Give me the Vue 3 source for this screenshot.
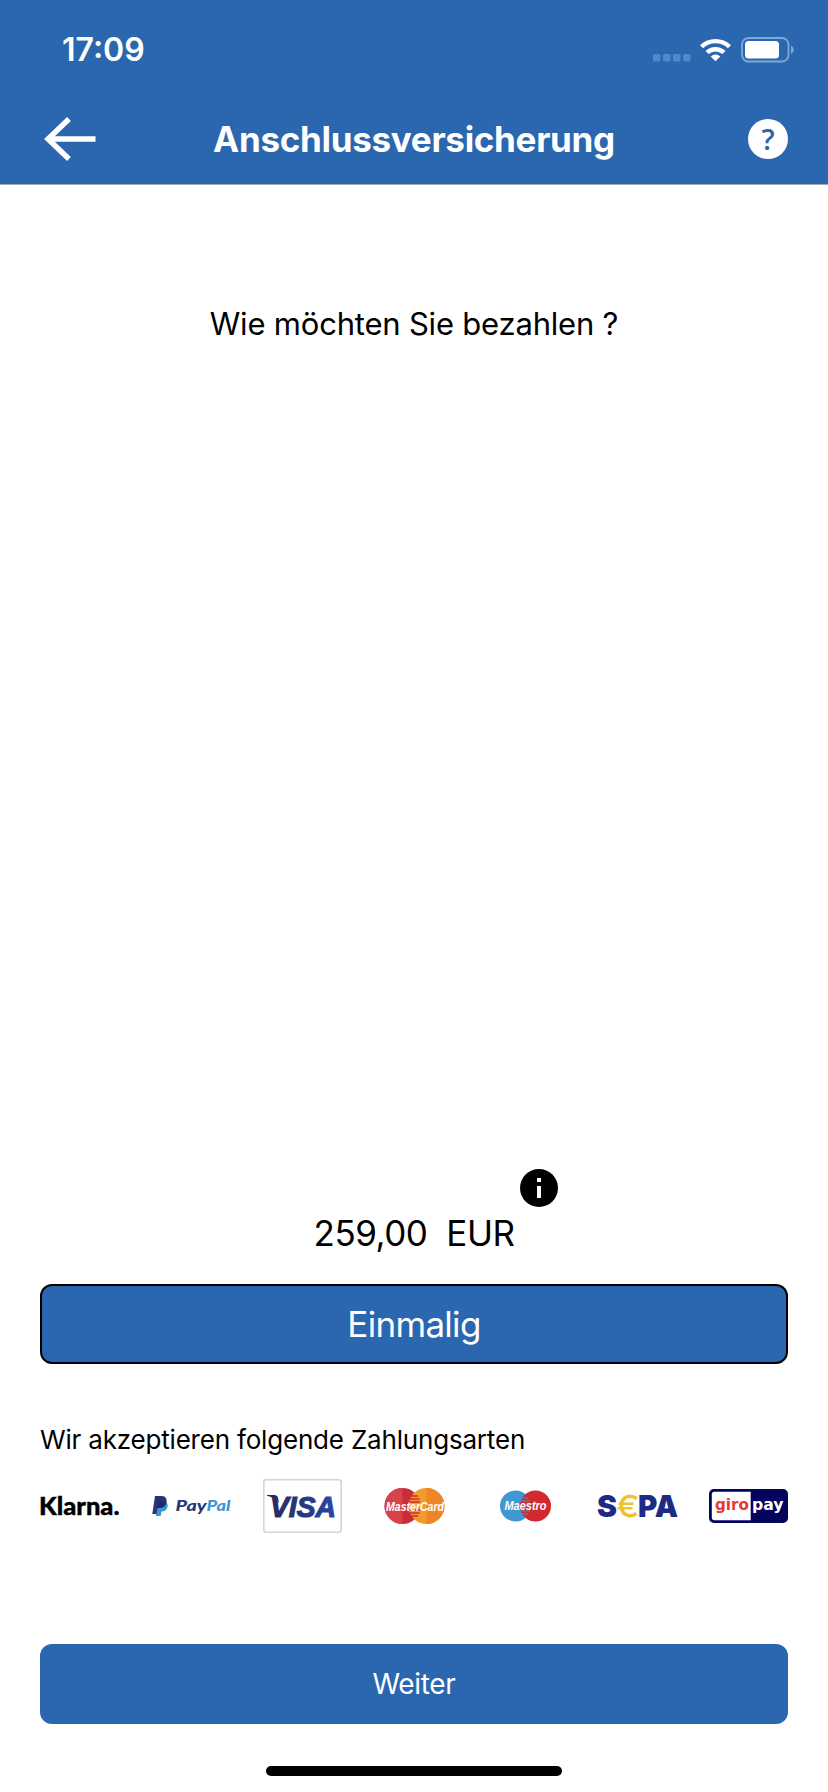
<template>
  <div class="screen">
    <header class="header">
      <div class="status-bar">
        <span class="time">17:09</span>
        <svg class="status-icons" width="142" height="26" viewBox="0 0 142 26">
          <g fill="#5089c8">
            <rect v-for="n in 4" :key="n" :x="n * 10 - 9" y="17" width="7.5" height="7.5" rx="1.5" />
          </g>
          <g fill="#fff">
            <path d="M48 8.2 A22.5 22.5 0 0 1 79 8.2 L75.9 11.2 A18 18 0 0 0 51.1 11.2 Z" />
            <path d="M53.5 13.9 A14.5 14.5 0 0 1 73.5 13.9 L70.3 17.1 A10 10 0 0 0 56.7 17.1 Z" />
            <path d="M58.7 19.4 A7 7 0 0 1 68.3 19.4 L63.5 24.2 Z" />
          </g>
          <rect x="90" y="1" width="46.5" height="23.5" rx="6.5" fill="none" stroke="#7fa9d8" stroke-width="1.8" />
          <rect x="93" y="4" width="34" height="17.5" rx="3.5" fill="#fff" />
          <path d="M139 8.5 Q141.8 10 141.8 12.7 T139 17 Z" fill="#7fa9d8" />
        </svg>
      </div>
      <div class="nav-bar">
        <svg class="back" width="52" height="46" viewBox="0 0 52 46">
          <path d="M51.5 23 H4 M25 3 L4 23 L25 43" fill="none" stroke="#fff" stroke-width="5.4" />
        </svg>
        <h1 class="title">{{ title }}</h1>
        <svg class="help" width="40" height="40" viewBox="0 0 40 40">
          <circle cx="20" cy="20" r="20" fill="#fff" />
          <text x="20" y="31" class="help-mark" text-anchor="middle">?</text>
        </svg>
      </div>
    </header>

    <main class="content">
      <p class="question">Wie möchten Sie bezahlen ?</p>

      <section class="offer">
        <svg class="info" width="38" height="38" viewBox="0 0 38 38">
          <circle cx="19" cy="19" r="19" fill="#000" />
          <path d="M17 9 h4 v4 h-4 Z M17 17 h4 v12 h-4 Z" fill="#fff" />
        </svg>
        <div class="price">
          <span class="amount">{{ amount }}</span>
          <span class="currency">EUR</span>
        </div>
        <button class="btn btn-once">Einmalig</button>
      </section>

      <p class="accepted">Wir akzeptieren folgende Zahlungsarten</p>
      <div class="payments">
        <svg class="logo" viewBox="0 0 79 54">
          <text x="-1" y="36" class="klarna" textLength="80.5" lengthAdjust="spacingAndGlyphs">Klarna.</text>
        </svg>

        <svg class="logo" viewBox="0 0 79 54">
          <path d="M5.5 22 H12 Q16.6 23.5 15.6 28 Q14.3 32.5 9.5 32.5 L8.7 37 H3.8 Z" fill="#3d95d6" />
          <path d="M3 17 H10 Q15.3 17.5 14.5 23 Q13.5 29 7.5 29 H5.5 L4.4 35 H0.3 Z" fill="#263577" />
          <path d="M6 22.3 H14.5 Q13.5 29 7.5 29 H4.9 Z" fill="#202a66" />
          <text x="23.5" y="32" class="paypal pay" textLength="31" lengthAdjust="spacingAndGlyphs">Pay</text>
          <text x="54.5" y="32" class="paypal pal" textLength="24" lengthAdjust="spacingAndGlyphs">Pal</text>
        </svg>

        <svg class="logo" viewBox="0 0 79 54">
          <defs>
            <linearGradient id="visa-blue">
              <stop offset="0" stop-color="#252a5e" />
              <stop offset="1" stop-color="#2947a5" />
            </linearGradient>
          </defs>
          <rect x="0.8" y="0.8" width="77.4" height="52.4" rx="2.5" fill="#fff" stroke="#d5d5d5" stroke-width="1.6" />
          <path d="M4 16 H12 Q14.5 16.3 15 19 L16 24 Q11 18 4 16.8 Z" fill="#252a5e" />
          <text x="7" y="37.5" class="visa" textLength="66" lengthAdjust="spacingAndGlyphs">VISA</text>
        </svg>

        <svg class="logo" viewBox="0 0 79 54">
          <circle cx="27.5" cy="27" r="18" fill="#cb2c38" />
          <path d="M27.5 9 a18 18 0 0 0 0 36 Z" fill="#d8434a" />
          <circle cx="51.5" cy="27" r="18" fill="#f49a2c" />
          <path d="M51.5 9 a18 18 0 0 1 0 36 Z" fill="#ee8528" />
          <path d="M36 17 H43 M34.5 20 H44.5 M34 23 H45 M34 31 H45 M34.5 34 H44.5 M36 37 H43" stroke="#cb2c38" stroke-width="1.3" />
          <text x="11" y="31.7" class="card-name" font-size="13.5" textLength="58" lengthAdjust="spacingAndGlyphs">MasterCard</text>
        </svg>

        <svg class="logo" viewBox="0 0 79 54">
          <circle cx="29.5" cy="27" r="15.5" fill="#4196d4" />
          <circle cx="49.5" cy="27" r="15.5" fill="#d2282e" />
          <path d="M36 19 H42 M35 22 H44 M34.5 32 H44 M36 35 H42" stroke="#4196d4" stroke-width="1.2" />
          <text x="18.5" y="31" class="card-name" font-size="12" textLength="42" lengthAdjust="spacingAndGlyphs">Maestro</text>
        </svg>

        <svg class="logo" viewBox="0 0 79 54">
          <text x="-1" y="37.7" class="sepa" textLength="20" lengthAdjust="spacingAndGlyphs">S</text>
          <path d="M38.8 19.5 Q35 17 31 17.3 Q23.5 18.5 23.3 27 Q23.5 35.5 31 36.7 Q35 37 38.5 34.5" fill="none" stroke="#f3c033" stroke-width="3.6" />
          <path d="M20.5 24.8 H35.5 M19.5 29.3 H34.5" stroke="#f3c033" stroke-width="2.6" />
          <text x="40" y="37.7" class="sepa" textLength="40" lengthAdjust="spacingAndGlyphs">PA</text>
        </svg>

        <svg class="logo" viewBox="0 0 79 54">
          <rect y="10" width="79" height="34" rx="5" fill="#04045f" />
          <path d="M41.7 12.8 H5.5 Q2.8 12.8 2.8 15.5 V38.5 Q2.8 41.2 5.5 41.2 H41.7 Z" fill="#fff" />
          <text x="6" y="31" class="giro" fill="#e33b39" textLength="34" lengthAdjust="spacingAndGlyphs">giro</text>
          <text x="43" y="31" class="giro" fill="#fff" textLength="31.5" lengthAdjust="spacingAndGlyphs">pay</text>
        </svg>
      </div>

      <button class="btn btn-next">Weiter</button>
    </main>
    <div class="home-indicator"></div>
  </div>
</template>

<script setup>
import { ref } from 'vue'

const title = ref('Anschlussversicherung')
const amount = ref('259,00')
</script>

<style>
body {
  margin: 0;
  background: #fff;
}
</style>

<style scoped>
.screen {
  display: flex;
  flex-direction: column;
  width: 828px;
  height: 1792px;
  overflow: hidden;
  background: #fff;
  color: #000;
  font-family: Inter, "Liberation Sans", sans-serif;
}
.header {
  box-sizing: border-box;
  height: 185px;
  background: #2b67af;
  border-bottom: 1px solid #a3a8b0;
  color: #fff;
}
.status-bar {
  display: flex;
  justify-content: space-between;
  align-items: center;
  height: 94px;
  padding: 6px 34px 0 62px;
  box-sizing: border-box;
}
.time {
  font-size: 32px;
  font-weight: 600;
  line-height: 40px;
}
.nav-bar {
  display: flex;
  align-items: center;
  justify-content: space-between;
  height: 90px;
  padding: 0 40px 0 44px;
}
.title {
  margin: 0 16px 0 0;
  font-size: 35px;
  font-weight: 700;
  line-height: 44px;
  letter-spacing: -0.3px;
}
.help-mark {
  font: 600 29px "Open Sans", sans-serif;
  fill: #2b67af;
}
.content {
  display: flex;
  flex-direction: column;
  flex: 1;
  padding: 0 40px;
}
.question {
  margin: 119px 0 0;
  font-size: 31px;
  line-height: 40px;
  letter-spacing: -0.2px;
  text-align: center;
  white-space: nowrap;
}
.offer {
  display: flex;
  flex-direction: column;
  margin-top: 825px;
}
.info {
  display: block;
  margin-left: 480px;
}
.price {
  display: flex;
  justify-content: center;
  gap: 19px;
  margin-top: 4px;
  font-size: 35px;
  line-height: 44px;
  letter-spacing: -0.5px;
}
.btn {
  display: block;
  box-sizing: border-box;
  width: 100%;
  height: 80px;
  padding: 0;
  border: none;
  border-radius: 12px;
  background: #2b67af;
  color: #fff;
  font-family: inherit;
  font-weight: 400;
}
.btn-once {
  margin-top: 29px;
  border: 2px solid #000;
  font-size: 35px;
  letter-spacing: -0.7px;
}
.accepted {
  margin: 60px 0 0;
  font-size: 26px;
  line-height: 32px;
  letter-spacing: -0.19px;
  white-space: nowrap;
}
.payments {
  display: flex;
  justify-content: space-between;
  margin-top: 23px;
}
.logo {
  display: block;
  width: 79px;
  height: 54px;
  overflow: visible;
}
.klarna {
  font: 900 25px Lato, sans-serif;
  stroke: #000;
  stroke-width: 0.4px;
}
.paypal {
  font: italic 900 14.5px Lato, sans-serif;
}
.pay {
  fill: #263577;
}
.pal {
  fill: #3d95d6;
}
.visa {
  font: italic 700 30px "Liberation Sans", sans-serif;
  fill: url(#visa-blue);
  stroke: url(#visa-blue);
  stroke-width: 1.2px;
}
.card-name {
  font-family: "Liberation Sans", sans-serif;
  font-style: italic;
  font-weight: 700;
  fill: #fff;
}
.sepa {
  font: 900 30px Inter, sans-serif;
  fill: #1c2b86;
}
.giro {
  font: 700 16px "DejaVu Sans", sans-serif;
}
.btn-next {
  margin-top: 111px;
  font-size: 28px;
  letter-spacing: -0.3px;
}
.home-indicator {
  flex: none;
  width: 296px;
  height: 10px;
  margin: 0 auto 16px;
  border-radius: 5px;
  background: #000;
}
</style>
